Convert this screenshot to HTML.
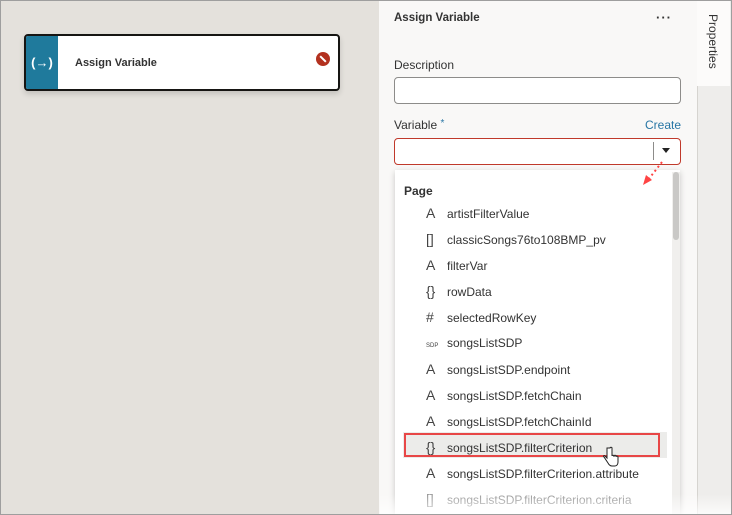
<!DOCTYPE html>
<html><head><style>
*{margin:0;padding:0;box-sizing:border-box}
body{width:732px;height:515px;overflow:hidden;font-family:"Liberation Sans",sans-serif;background:#e4e1dc;position:relative;color:#2b2a28}
.frame{position:absolute;inset:0;border:1px solid #9e9e9e;z-index:20;pointer-events:none}
.card{position:absolute;left:24px;top:34px;width:316px;height:57px;background:#fff;border:2px solid #161513;border-radius:4px;box-shadow:0 3px 6px rgba(0,0,0,.15);overflow:hidden}
.card .ic{position:absolute;left:0;top:0;width:32px;height:100%;background:#1f7a9c;color:#fff;font-weight:bold;font-size:13px;text-align:center;line-height:53px}
.card .t{position:absolute;left:49px;top:21px;font-size:11px;font-weight:bold;color:#333}
.card .err{position:absolute;right:8px;top:16px;width:14px;height:14px;border-radius:50%;background:#b3311f}
.card .err:after{content:"";position:absolute;left:3px;top:6px;width:8px;height:2px;background:#fff;transform:rotate(45deg)}
.panel{position:absolute;left:379px;top:0;width:318px;height:515px;background:#f9f8f7}
.strip{position:absolute;left:697px;top:0;width:35px;height:515px;background:#eeedeb;border-left:1px solid #d6d4d0}
.tab{position:absolute;left:697px;top:0;width:33px;height:86px;background:#fcfbfa}
.tab span{position:absolute;left:9px;top:14px;writing-mode:vertical-rl;font-size:12px;color:#333}
.lbl{position:absolute;font-size:12px;color:#333}
.inp{position:absolute;left:394px;width:287px;height:27px;background:#fff;border:1px solid #8d8c8a;border-radius:4px}
.dd{position:absolute;left:395px;top:170px;width:285px;height:345px;background:#fff;box-shadow:0 2px 6px rgba(0,0,0,.2)}
.sb{position:absolute;left:672px;top:172px;width:8px;height:343px;background:#f0efed}
.th{position:absolute;left:673px;top:172px;width:6px;height:68px;background:#c9c8c6;border-radius:3px}
.it{position:absolute;left:426px;font-size:12px;color:#333;height:26px;line-height:26px;white-space:nowrap}
.it i{display:inline-block;width:21px;font-style:normal;font-size:14px;color:#444}
</style></head><body>
<div class="card"><div class="ic">(→)</div><div class="t">Assign Variable</div><div class="err"></div></div>
<div class="panel"></div>
<div class="strip"></div>
<div class="tab"><span>Properties</span></div>
<div class="lbl" style="left:394px;top:12px;font-weight:bold;font-size:11.5px">Assign Variable</div>
<div class="lbl" style="left:656px;top:10px;font-weight:bold;font-size:13px;letter-spacing:1px">···</div>
<div class="lbl" style="left:394px;top:58px">Description</div>
<div class="inp" style="top:77px"></div>
<div class="lbl" style="left:394px;top:118px">Variable <span style="color:#2876a5;font-size:10px;vertical-align:top">*</span></div>
<div class="lbl" style="left:645px;top:118px;color:#2876a5">Create</div>
<div class="inp" style="top:138px;border-color:#c0392b"></div>
<div style="position:absolute;left:653px;top:142px;width:1px;height:18px;background:#8d8c8a"></div>
<div style="position:absolute;left:662px;top:148px;border:4px solid transparent;border-top:5px solid #222"></div>
<div class="dd"></div>
<div class="sb"></div><div class="th"></div>
<svg style="position:absolute;left:640px;top:160px" width="30" height="26"><line x1="22" y1="2" x2="8" y2="20" stroke="#f44" stroke-width="2" stroke-dasharray="2 3"/><polygon points="3,25 6,15 12,20" fill="#f44"/></svg>
<div class="lbl" style="left:404px;top:184px;font-weight:bold">Page</div>
<div style="position:absolute;left:403px;top:432px;width:264px;height:26px;background:#ececea"></div>
<div style="position:absolute;left:404px;top:433px;width:256px;height:24px;border:2px solid #e84747"></div>
<div class="it" style="top:200px"><i>A</i>artistFilterValue</div>
<div class="it" style="top:226px"><i>[]</i>classicSongs76to108BMP_pv</div>
<div class="it" style="top:252px"><i>A</i>filterVar</div>
<div class="it" style="top:278px"><i>{}</i>rowData</div>
<div class="it" style="top:304px"><i>#</i>selectedRowKey</div>
<div class="it" style="top:330px"><i style="font-size:6px">SDP</i>songsListSDP</div>
<div class="it" style="top:356px"><i>A</i>songsListSDP.endpoint</div>
<div class="it" style="top:382px"><i>A</i>songsListSDP.fetchChain</div>
<div class="it" style="top:408px"><i>A</i>songsListSDP.fetchChainId</div>
<div class="it" style="top:434px"><i>{}</i>songsListSDP.filterCriterion</div>
<div class="it" style="top:460px"><i>A</i>songsListSDP.filterCriterion.attribute</div>
<div class="it" style="top:486px;color:#999"><i style="color:#999">[]</i>songsListSDP.filterCriterion.criteria</div>
<div style="position:absolute;left:380px;top:494px;width:352px;height:21px;background:linear-gradient(rgba(255,255,255,0),rgba(255,255,255,.8))"></div>
<svg style="position:absolute;left:602px;top:446px" width="18" height="22"><path d="M5 2v10l-2-2c-1-1-2 0-1 1l4 6c1 2 2 3 4 3h3c2 0 3-2 3-4v-5c0-1-1-1-2-1v1-1c0-1-2-1-2 0v1-1c0-1-2-1-2 0v-8c0-1-2-1-2 0z" fill="#fff" stroke="#222" stroke-width="1"/></svg>
<div class="frame"></div>
</body></html>
